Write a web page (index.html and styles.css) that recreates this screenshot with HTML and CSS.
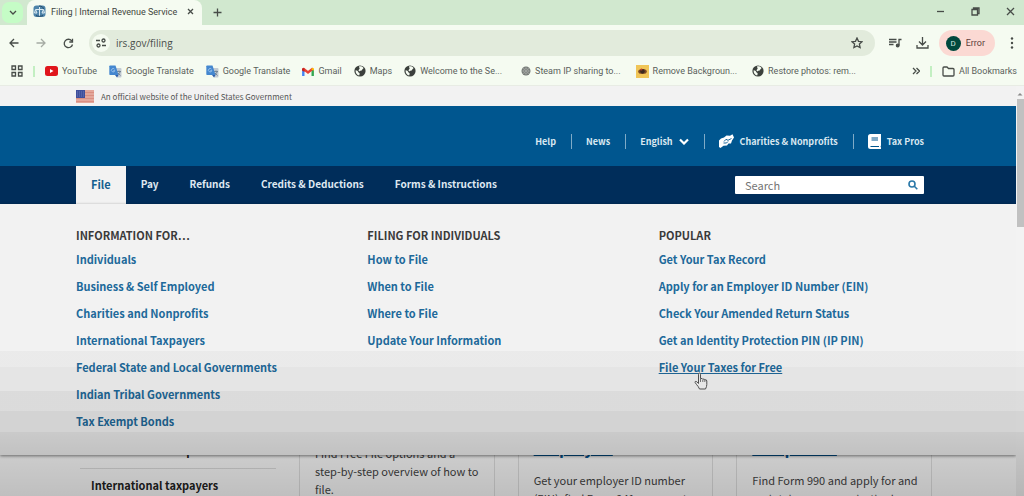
FILE: index.html
```html
<!DOCTYPE html>
<html lang="en">

<head>
    <meta charset="UTF-8">
    <meta name="viewport" content="width=device-width, initial-scale=1.0">
    <title>Filing | Internal Revenue Service</title>
    <link rel="stylesheet" href="styles.css">
</head>

<body>
    <svg class="symbols" aria-hidden="true">
        <symbol id="globe" viewBox="0 0 12 12">
            <circle cx="6" cy="6" r="5.6" fill="#3b403c" />
            <path d="M1.6 5.2c1.5 0 2.3.8 2.6 1.8.3.9 1.5.7 1.5 1.7 0 .7-.5 1-.5 1.8C3 10.200 1.300 8 1.600 5.200zM5 1.500c2-.5 3.600.2 4.600 1.600-.4 1-1.300 1-1.500 1.800-.3.900-1.700.3-2.100 1.100-.5.800-1.500.200-1.400-.700C4.700 4.200 5.800 4.200 5.600 3.200 5.500 2.600 4.900 2.300 5 1.500z" fill="#f5fbf1" />
        </symbol>
        <symbol id="translate" viewBox="0 0 13 13">
            <path d="M5 3h6.500q1 0 1 1v7.500q0 1-1 1H8z" fill="#c3cbd3" />
            <path d="M8 6.500h4M10 5.500v1M11.300 6.500c-.5 1.500-1.300 2.500-2.300 3.200M9 8l2.500 2.500" stroke="#66788a" stroke-width=".8" fill="none" />
            <path d="M1 .5h5.500L9.500 10H1Q.3 10 .3 9.200V1.200Q.3.500 1 .5z" fill="#4487cf" />
            <path d="M5.500 4.200A1.700 1.700 0 1 0 5.800 5.600H4.400" stroke="#a9cdf0" stroke-width=".8" fill="none" />
            <path d="M6 10h3.500L8 12.500z" fill="#2d5da8" />
        </symbol>
    </svg>

    <div class="tab-strip">
        <button class="tab-search" aria-label="Search tabs">
            <svg width="8" height="6" viewBox="0 0 8 6"><path d="M1 1l3 3 3-3" /></svg>
        </button>
        <div class="tab">
            <svg class="favicon" width="13" height="13" viewBox="0 0 13 13">
                <rect x=".5" y=".5" width="12" height="11.500" rx="3" fill="#4d83a9" />
                <path d="M6.500 2v9M3 4.500h7M2.500 4.500L1.500 8h2.500zM10.500 4.500L9 8h2.500z" stroke="#dcebf3" fill="none" />
                <path d="M6 1c3 0 4 1 4.500 3M3 10.500c2 1 5 1 7 0" stroke="#234c6c" fill="none" />
            </svg>
            <span class="tab-title">Filing | Internal Revenue Service</span>
            <button class="tab-close" aria-label="Close tab">
                <svg width="7" height="7" viewBox="0 0 7 7"><path d="M1 1l5 5M6 1L1 6" /></svg>
            </button>
        </div>
        <button class="new-tab" aria-label="New tab">
            <svg width="9" height="9" viewBox="0 0 9 9"><path d="M4.500.5v8M.5 4.500h8" /></svg>
        </button>
        <div class="window-buttons">
            <button aria-label="Minimize"><svg width="9" height="9" viewBox="0 0 9 9"><path d="M1 4.500h7" /></svg></button>
            <button aria-label="Restore"><svg width="9" height="9" viewBox="0 0 9 9"><path d="M1 2.500h5.500V8H1zM2.500 2.500V1H8v5.500H6.500" /></svg></button>
            <button aria-label="Close"><svg width="9" height="9" viewBox="0 0 9 9"><path d="M1 1l7 7M8 1L1 8" /></svg></button>
        </div>
    </div>

    <div class="toolbar">
        <button aria-label="Back"><svg width="10" height="10" viewBox="0 0 10 10"><path d="M9.500 5H1M5 1L1 5l4 4" /></svg></button>
        <button class="disabled" aria-label="Forward"><svg width="10" height="10" viewBox="0 0 10 10"><path d="M.5 5H9M5 1l4 4-4 4" /></svg></button>
        <button aria-label="Reload"><svg width="11" height="11" viewBox="0 0 11 11"><path d="M9.500 6.500A4.200 4.200 0 1 1 8.700 2.800M9.500.8v3.200H6.300" /></svg></button>
        <div class="omnibox">
            <button class="site-info" aria-label="Site information">
                <svg width="10" height="10" viewBox="0 0 10 10"><path d="M0 2.500h4M6 7.500h4" /><circle cx="7.500" cy="2.500" r="1.500" /><circle cx="2.500" cy="7.500" r="1.500" /></svg>
            </button>
            <input class="address" type="text" value="irs.gov/filing" aria-label="Address bar">
            <button aria-label="Bookmark this tab">
                <svg width="12" height="12" viewBox="0 0 12 12"><path d="M6 1l1.500 3.300 3.500.4-2.600 2.400.7 3.500L6 8.900l-3.100 1.700.7-3.500L1 4.700l3.500-.4z" /></svg>
            </button>
        </div>
        <button class="media" aria-label="Media controls">
            <svg width="13" height="10" viewBox="0 0 13 10"><path d="M0 1.500h7.500M0 4h7.500M0 6.500h4.500M10 7.500V1.500h2.500" /><circle cx="8.700" cy="7.500" r="1.300" fill="#474c48" /></svg>
        </button>
        <button class="downloads" aria-label="Downloads">
            <svg width="13" height="12" viewBox="0 0 13 12"><path d="M6.500 0v7.500M3 4.500l3.500 3.500L10 4.500M1 8v3h11V8" /></svg>
        </button>
        <button class="profile"><span class="avatar">D</span>Error</button>
        <button class="more" aria-label="Menu">
            <svg width="4" height="12" viewBox="0 0 4 12"><g class="solid"><circle cx="2" cy="1.500" r="1.200" /><circle cx="2" cy="6" r="1.200" /><circle cx="2" cy="10.500" r="1.200" /></g></svg>
        </button>
    </div>

    <div class="bookmarks">
        <button class="apps" aria-label="Apps">
            <svg width="12" height="12" viewBox="0 0 12 12"><path d="M1 1h3.500v3.500H1zM7.500 1H11v3.500H7.500zM1 7.500h3.500V11H1zM7.500 7.500H11V11H7.500z" /></svg>
        </button>
        <span class="bar"></span>
        <a href="#">
            <svg width="13" height="10" viewBox="0 0 13 10"><rect width="13" height="10" rx="2.500" fill="#e0161c" /><path d="M5 3v4l3.500-2z" fill="#fff" /></svg>YouTube</a>
        <a href="#"><svg width="13" height="13"><use href="#translate" /></svg>Google Translate</a>
        <a href="#"><svg width="13" height="13"><use href="#translate" /></svg>Google Translate</a>
        <a href="#">
            <svg width="12" height="9" viewBox="0 0 12 9"><path d="M1.300 9V2" stroke="#4285f4" stroke-width="2.400" /><path d="M10.700 9V2" stroke="#34a853" stroke-width="2.400" /><path d="M1 1.500l5 4 5-4" stroke="#ea4335" stroke-width="2.400" fill="none" /><path d="M9.500 2.700V1.500Q10.500.300 12 1.500v2z" fill="#fbbc04" /><path d="M0 3.500V1.500Q1 .3 2.500 1.500v3.500z" fill="#c5221f" /></svg>Gmail</a>
        <a href="#"><svg width="12" height="12"><use href="#globe" /></svg>Maps</a>
        <a href="#"><svg width="12" height="12"><use href="#globe" /></svg>Welcome to the Se...</a>
        <a class="bm-steam" href="#">
            <svg width="10" height="10" viewBox="0 0 10 10"><circle cx="5" cy="5" r="4.500" fill="#777b78" /><path d="M5 .5v9M.5 5h9M2 2l6 6M8 2L2 8" stroke="#a9ada9" stroke-width=".6" /><circle cx="5" cy="5" r="2.500" fill="none" stroke="#a9ada9" stroke-width=".6" /></svg>Steam IP sharing to...</a>
        <a class="bm-wide" href="#">
            <svg width="13" height="13" viewBox="0 0 13 13"><rect width="13" height="13" fill="#f0c557" /><ellipse cx="6.500" cy="6.500" rx="4.300" ry="2.500" fill="#7c4a25" /><circle cx="6.500" cy="6.300" r="2.200" fill="#3b2a20" /><circle cx="5.500" cy="4.500" r="1" fill="#c3382a" /></svg>Remove Backgroun...</a>
        <a class="bm-wide" href="#"><svg width="12" height="12"><use href="#globe" /></svg>Restore photos: rem...</a>
        <button class="overflow" aria-label="More bookmarks">
            <svg width="8" height="8" viewBox="0 0 8 8"><path d="M1 1l3 3-3 3M4.500 1l3 3-3 3" /></svg>
        </button>
        <span class="bar"></span>
        <a href="#">
            <svg width="13" height="11" viewBox="0 0 13 11"><path class="line" d="M1 9V2q0-1 1-1h3l1.500 1.500H11q1 0 1 1V9q0 1-1 1H2Q1 10 1 9z" /></svg>All Bookmarks</a>
    </div>

    <div class="viewport">
        <div class="page">
            <div class="gov-banner">
                <svg width="18" height="13" viewBox="0 0 18 13">
                    <rect width="18" height="13" fill="#e3a79b" />
                    <path d="M0 2.500h18M0 5.500h18M0 8.500h18M0 11.500h18" stroke="#d98f82" />
                    <rect width="9" height="8" fill="#3f4f9c" />
                    <path d="M1 2h7M1 4h7M1 6h7" stroke="#6c79b5" stroke-dasharray="1 1" />
                </svg>
                An official website of the United States Government
            </div>
            <header class="site-header">
                <nav class="utility" aria-label="Utility">
                    <a href="#">Help</a>
                    <a href="#">News</a>
                    <a href="#">English
                        <svg width="10" height="7" viewBox="0 0 10 7"><path d="M1 1.500l4 4 4-4" stroke="#fff" stroke-width="2.200" fill="none" /></svg>
                    </a>
                    <a href="#">
                        <svg width="15" height="14" viewBox="0 0 15 14"><path d="M0 6.500L2 4.500 5 3.500 7.500 1.500l3.500.3L13.500.3 15 3.500 13 6.500l-1 3H9.500L8 11.500l-3.500.3L1.500 14 0 13z" fill="#fff" /><path d="M5 7.500l2-2.200 2 1 3.500-1.800M4.500 9h3l1.500-1.500" stroke="#00568f" stroke-width=".9" fill="none" /></svg>
                        Charities &amp; Nonprofits</a>
                    <a href="#">
                        <svg width="13" height="15" viewBox="0 0 13 15"><path d="M2.500 0H13v11.500q-1 1 0 2V15H2.500Q0 15 0 12.500v-10Q0 0 2.500 0z" fill="#fff" /><path d="M3.500 4h6.500M3.500 6h6.500M2.500 12.500H11" stroke="#00568f" stroke-width="1.200" /></svg>
                        Tax Pros</a>
                </nav>
            </header>
            <div class="nav-bar">
                <nav class="main-nav" aria-label="Main">
                    <a class="active" href="#">File</a>
                    <a href="#">Pay</a>
                    <a href="#">Refunds</a>
                    <a href="#">Credits &amp; Deductions</a>
                    <a href="#">Forms &amp; Instructions</a>
                </nav>
                <form class="search">
                    <input type="search" placeholder="Search" aria-label="Search">
                    <button aria-label="Submit search">
                        <svg width="10" height="10" viewBox="0 0 10 10"><circle cx="4" cy="4" r="3" /><path d="M6.300 6.300L9.300 9.300" /></svg>
                    </button>
                </form>

                <div class="mega-menu">
                    <div>
                        <h2>Information For…</h2>
                        <ul>
                            <li><a href="#">Individuals</a></li>
                            <li><a href="#">Business &amp; Self Employed</a></li>
                            <li><a href="#">Charities and Nonprofits</a></li>
                            <li><a href="#">International Taxpayers</a></li>
                            <li><a href="#">Federal State and Local Governments</a></li>
                            <li><a href="#">Indian Tribal Governments</a></li>
                            <li><a href="#">Tax Exempt Bonds</a></li>
                        </ul>
                    </div>
                    <div>
                        <h2>Filing for Individuals</h2>
                        <ul>
                            <li><a href="#">How to File</a></li>
                            <li><a href="#">When to File</a></li>
                            <li><a href="#">Where to File</a></li>
                            <li><a href="#">Update Your Information</a></li>
                        </ul>
                    </div>
                    <div>
                        <h2>Popular</h2>
                        <ul>
                            <li><a href="#">Get Your Tax Record</a></li>
                            <li><a href="#">Apply for an Employer ID Number (EIN)</a></li>
                            <li><a href="#">Check Your Amended Return Status</a></li>
                            <li><a href="#">Get an Identity Protection PIN (IP PIN)</a></li>
                            <li class="hovered"><a href="#">File Your Taxes for Free</a>
                                <svg class="pointer" width="14" height="18" viewBox="0 0 14 18"><path d="M4.500 10V2.200q0-1.200 1-1.200t1 1.200v4.500q2-.8 2.300.5 1.700-.6 2 .6 2-.4 2 1.200v3.500q0 2-1.300 4.500h-6q-1-2.500-3-4.500Q.3 10 1.300 9.400q1.200-.6 3.200 2.100z" fill="#f4f4f4" stroke="#555" /><path d="M6.500 7v3M8.800 7.500V10M10.800 8v2" stroke="#777" /></svg>
                            </li>
                        </ul>
                    </div>
                </div>
            </div>

            <main class="content">
                <ul class="side-nav">
                    <li>Charities and nonprofits</li>
                    <li>International taxpayers</li>
                </ul>
                <article class="card intro">
                    <p>Find Free File options and a step-by-step overview of how to file.</p>
                </article>
                <article class="card">
                    <a href="#">Employed</a>
                    <p>Get your employer ID number (EIN), find Form 941, prepare to</p>
                </article>
                <article class="card">
                    <a href="#">Nonprofits</a>
                    <p>Find Form 990 and apply for and maintain your organization's</p>
                </article>
            </main>
        </div>
        <div class="scrollbar">
            <svg width="8" height="8" viewBox="0 0 8 8"><path d="M1.500 5.500L4 3l2.500 2.500z" fill="#8a8a8a" /></svg>
            <div class="thumb"></div>
        </div>
    </div>
    <div class="shade"></div>
</body>

</html>
```

FILE: styles.css
```css
* {
    box-sizing: border-box;
}

body {
    margin: 0;
    height: 100vh;
    display: flex;
    flex-direction: column;
    overflow: hidden;
    position: relative;
    font-family: "Noto Sans CJK SC", "Open Sans", sans-serif;
    color: #333;
}

button {
    border: 0;
    padding: 0;
    background: none;
    font: inherit;
    color: inherit;
    display: flex;
    align-items: center;
    justify-content: center;
}

a {
    color: inherit;
    text-decoration: none;
}

svg {
    flex: none;
}

ul {
    list-style: none;
    margin: 0;
    padding: 0;
}

.symbols {
    position: absolute;
    width: 0;
    height: 0;
}

/* ------------------Browser chrome------------------- */
.tab-strip,
.toolbar,
.bookmarks {
    display: flex;
    align-items: center;
    flex: none;
    font-family: Roboto, sans-serif;
    font-size: 9px;
    color: #5a5f5b;
    background-color: #f5fbf1;
}

.tab-strip button svg,
.toolbar svg,
.apps svg,
.overflow svg,
.line {
    fill: none;
    stroke: #474c48;
    stroke-width: 1.3;
}

.tab-strip {
    height: 25px;
    background-color: #d1e8cf;
}

.tab-search {
    width: 21px;
    height: 21px;
    margin-left: 2px;
    border-radius: 7px;
    background-color: #c5fcc6;
}

.tab {
    display: flex;
    align-items: center;
    align-self: stretch;
    width: 175px;
    margin-left: 4px;
    padding: 0 8px 2px 6px;
    border-radius: 8px 8px 0 0;
    background-color: #f5fbf1;
    color: #3f4540;
}

.tab-title {
    flex: 1;
    margin-left: 5px;
    white-space: nowrap;
}

.new-tab {
    margin-left: 11px;
}

.window-buttons {
    display: flex;
    gap: 26px;
    margin-left: auto;
    padding: 0 9px 2px 0;
}

.toolbar {
    height: 36px;
    padding: 0 10px 0 9px;
}

.toolbar > button:nth-child(2),
.toolbar > button:nth-child(3) {
    margin-left: 17px;
}

.disabled {
    opacity: 0.45;
}

.omnibox {
    display: flex;
    align-items: center;
    flex: 1;
    height: 26px;
    margin-left: 15px;
    padding: 0 12px 0 3px;
    border-radius: 13px;
    background-color: #e2ebdc;
}

.site-info {
    width: 18px;
    height: 18px;
    border-radius: 50%;
    background-color: #f5fbf1;
}

.address {
    flex: 1;
    min-width: 0;
    border: 0;
    padding: 0 6px;
    background: none;
    font-family: "Open Sans", sans-serif;
    font-size: 10px;
    color: #4a4f4b;
}

.media,
.downloads {
    margin-left: 14px;
}

.profile {
    height: 26px;
    margin-left: 10px;
    padding: 0 10px 0 7px;
    gap: 5px;
    border-radius: 13px;
    background-color: #fbd9d3;
    color: #5d3f3b;
}

.avatar {
    width: 15px;
    height: 15px;
    border-radius: 50%;
    background-color: #00483d;
    color: #cfe3df;
    font-size: 8px;
    line-height: 15px;
}

.more {
    margin-left: 15px;
}

.solid {
    fill: #474c48;
    stroke: none;
}

.bookmarks {
    height: 25px;
    padding: 0 7px 4px 11px;
    border-bottom: 1px solid #e8ece4;
}

.bookmarks a {
    display: flex;
    align-items: center;
    gap: 4px;
    white-space: nowrap;
}

.bookmarks a + a {
    margin-left: 12px;
}

.bookmarks .bm-steam {
    margin-left: 19px;
}

.bookmarks .bm-wide {
    margin-left: 15px;
}

.bar {
    width: 2px;
    height: 11px;
    margin: 0 10px;
    background-color: #c3efc2;
}

.overflow {
    margin-left: auto;
}

/* ------------------Page------------------- */
.viewport {
    display: flex;
    flex: 1;
    min-height: 0;
}

.page {
    flex: 1;
    min-width: 0;
    overflow: hidden;
    background-color: #fff;
}

.gov-banner,
.site-header,
.nav-bar,
.mega-menu,
.content {
    padding-left: 76px;
    padding-right: 92px;
}

.gov-banner {
    display: flex;
    align-items: center;
    gap: 7px;
    height: 20px;
    background-color: #f2f2f2;
    font-size: 8px;
    color: #555;
}

.site-header {
    height: 60px;
    padding-top: 11px;
    background-color: #00568f;
}

.utility {
    display: flex;
    align-items: center;
    justify-content: flex-end;
    height: 48px;
    font-size: 9px;
    font-weight: 700;
    line-height: 15px;
    color: #d9e8f1;
}

.utility a {
    display: flex;
    align-items: center;
    gap: 6px;
    white-space: nowrap;
}

.utility a + a {
    margin-left: 15px;
    padding-left: 14px;
    border-left: 1px solid #7fabc7;
}

.nav-bar {
    display: flex;
    align-items: center;
    justify-content: space-between;
    position: relative;
    height: 38px;
    background-color: #002d5a;
}

.main-nav {
    display: flex;
    align-self: stretch;
    font-size: 10px;
    font-weight: 700;
    color: #dfe8f1;
}

.main-nav a {
    display: flex;
    align-items: center;
    padding: 0 15px 3px;
    white-space: nowrap;
}

.main-nav a + a {
    padding-right: 16px;
}

.main-nav .active {
    background-color: #f2f2f2;
    color: #15608f;
    font-size: 11px;
}

.search {
    display: flex;
    width: 189px;
    height: 18px;
    padding-right: 6px;
    border-radius: 1px;
    background-color: #fff;
}

.search input {
    flex: 1;
    min-width: 0;
    border: 0;
    padding: 0 10px;
    background: none;
    font: inherit;
    font-size: 11px;
}

.search input::placeholder {
    color: #757575;
}

.search svg {
    fill: none;
    stroke: #2a78a8;
    stroke-width: 1.6;
}

.mega-menu {
    position: absolute;
    top: 100%;
    left: 0;
    right: 0;
    display: grid;
    grid-template-columns: repeat(3, 1fr);
    gap: 26px;
    padding-top: 22px;
    padding-bottom: 16px;
    background-color: #f2f2f2;
    box-shadow: 0 1px 3px rgba(0, 0, 0, 0.5);
    font-size: 11px;
    line-height: 19px;
}

.mega-menu h2 {
    margin: 0 0 5px;
    font-size: 11px;
    line-height: 19px;
    text-transform: uppercase;
    color: #3a3a3a;
}

.mega-menu li {
    margin-bottom: 8px;
    font-weight: 700;
    color: #20699a;
    white-space: nowrap;
}

.hovered {
    position: relative;
}

.hovered a {
    text-decoration: underline;
}

.pointer {
    position: absolute;
    left: 35px;
    top: 14px;
}

.content {
    display: grid;
    grid-template-columns: 200px repeat(3, 1fr);
    gap: 23px;
    padding-top: 230px;
    padding-right: 84px;
    font-size: 11px;
    line-height: 18px;
}

.side-nav {
    margin-left: 4px;
    font-weight: 700;
    color: #222;
}

.side-nav li {
    padding: 7px 11px 9px;
}

.side-nav li + li {
    border-top: 1px solid #e0e0e0;
}

.card {
    height: 80px;
    padding: 4px 6px 4px 15px;
    border: 1px solid #e2e2e2;
    border-top: 0;
    color: #444;
}

.card p {
    margin: 15px 0 0;
}

.card a {
    display: block;
    color: #00599c;
    font-size: 16px;
    font-weight: 700;
    text-decoration: underline;
}

.intro {
    padding-right: 15px;
}

.intro p {
    margin: 6px 0 0;
}

.scrollbar {
    width: 8px;
    background-color: #f3f3f3;
}

.scrollbar svg {
    display: block;
    margin: 4px 0 1px;
}

.thumb {
    height: 128px;
    margin-left: 1px;
    background-color: #c1c1c1;
}

/* darkening towards the bottom of the window, in visible bands */
.shade {
    position: absolute;
    left: 0;
    right: 0;
    bottom: 0;
    height: 145px;
    pointer-events: none;
    background: linear-gradient(
        rgba(0, 0, 0, 0.03) 16px,
        rgba(0, 0, 0, 0.055) 16px 40px,
        rgba(0, 0, 0, 0.095) 40px 60px,
        rgba(0, 0, 0, 0.13) 60px 81px,
        rgba(0, 0, 0, 0.165) 81px,
        rgba(0, 0, 0, 0.2) 104px,
        rgba(0, 0, 0, 0.25) 145px);
}
```
